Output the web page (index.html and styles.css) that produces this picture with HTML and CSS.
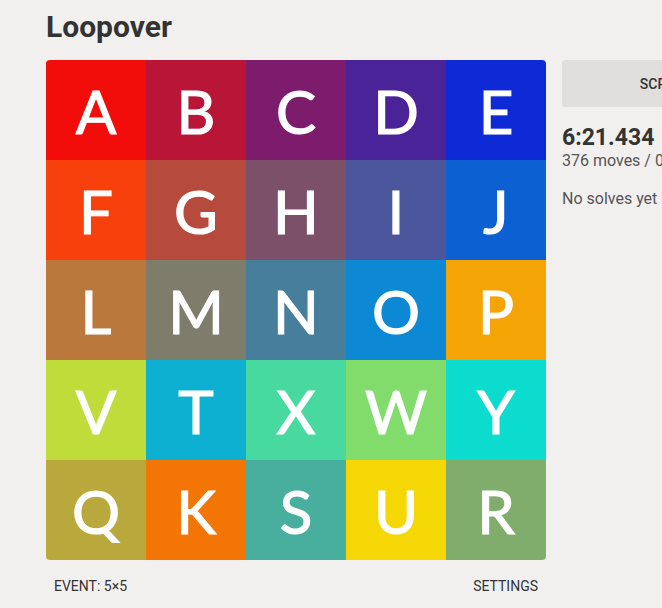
FILE: index.html
```html
<!DOCTYPE html>
<html lang="en">
<head>
    <meta charset="UTF-8">
    <meta name="viewport" content="width=device-width, initial-scale=1.0">
    <title>Loopover</title>
    <link rel="stylesheet" href="styles.css">
</head>
<body>
    <div class="page">
        <h1 class="title">Loopover</h1>
        <div class="main">
            <div class="left">
                <div class="board">
                    <div class="tile" style="background:#f20d0a">A</div>
                    <div class="tile" style="background:#b81537">B</div>
                    <div class="tile" style="background:#7d1c6c">C</div>
                    <div class="tile" style="background:#4a2399">D</div>
                    <div class="tile" style="background:#0d2ad6">E</div>
                    <div class="tile" style="background:#f8400c">F</div>
                    <div class="tile" style="background:#b64a3d">G</div>
                    <div class="tile" style="background:#7d5069">H</div>
                    <div class="tile" style="background:#4a559c">I</div>
                    <div class="tile" style="background:#0d60d2">J</div>
                    <div class="tile" style="background:#ba783c">L</div>
                    <div class="tile" style="background:#7e7c6b">M</div>
                    <div class="tile" style="background:#477e9b">N</div>
                    <div class="tile" style="background:#0d88d4">O</div>
                    <div class="tile" style="background:#f4a505">P</div>
                    <div class="tile" style="background:#c0dc3a">V</div>
                    <div class="tile" style="background:#0db0d0">T</div>
                    <div class="tile" style="background:#48d9a0">X</div>
                    <div class="tile" style="background:#82dc6c">W</div>
                    <div class="tile" style="background:#0cdcce">Y</div>
                    <div class="tile" style="background:#b9a93c">Q</div>
                    <div class="tile" style="background:#f37506">K</div>
                    <div class="tile" style="background:#48ae9e">S</div>
                    <div class="tile" style="background:#f5d705">U</div>
                    <div class="tile" style="background:#80ac6c">R</div>
                </div>
                <div class="footer">
                    <button class="link-btn">Event: 5×5</button>
                    <button class="link-btn">Settings</button>
                </div>
            </div>
            <div class="side">
                <button class="scramble">Scramble</button>
                <div class="time">6:21.434</div>
                <div class="moves">376 moves / 0.99 moves/s</div>
                <div class="solves">No solves yet</div>
            </div>
        </div>
    </div>
</body>
</html>
```
FILE: styles.css
```css
body {
    margin: 0;
    background-color: #f2f0ef;
    font-family: Roboto, "Liberation Sans", sans-serif;
    color: #333;
    overflow: hidden;
}
.page {
    padding: 8px 0 0 46px;
}
.title {
    margin: 0;
    font-size: 30px;
    font-weight: 700;
    line-height: 38px;
    height: 52px;
    color: #333;
}
.main {
    display: flex;
    gap: 16px;
    align-items: flex-start;
}
.board {
    display: grid;
    grid-template-columns: repeat(5, 100px);
    grid-template-rows: repeat(5, 100px);
    border-radius: 4px;
    overflow: hidden;
    width: 500px;
}
.tile {
    display: flex;
    align-items: center;
    justify-content: center;
    color: white;
    font-family: Lato, "Noto Sans", sans-serif;
    font-weight: 400;
    font-size: 60px;
    -webkit-text-stroke: 1.2px white;
    padding-top: 2px;
}
.footer {
    display: flex;
    justify-content: space-between;
    padding: 12px 0 10px;
}
.link-btn {
    background: none;
    border: none;
    padding: 6px 8px;
    font-family: Roboto, "Liberation Sans", sans-serif;
    font-size: 14px;
    font-weight: 400;
    text-transform: uppercase;
    color: #333;
    cursor: pointer;
}
.side {
    flex-shrink: 0;
    width: 240px;
}
.scramble {
    width: 228px;
    height: 47px;
    background-color: #e0dfdd;
    border: none;
    border-radius: 3px;
    font-family: Roboto, "Liberation Sans", sans-serif;
    font-size: 14px;
    font-weight: 500;
    text-transform: uppercase;
    color: #333;
}
.time {
    margin-top: 16px;
    font-size: 23px;
    font-weight: 700;
    line-height: 29px;
}
.moves {
    font-size: 16px;
    color: #555;
    line-height: 18px;
}
.solves {
    margin-top: 19px;
    font-size: 16px;
    color: #555;
}
```
